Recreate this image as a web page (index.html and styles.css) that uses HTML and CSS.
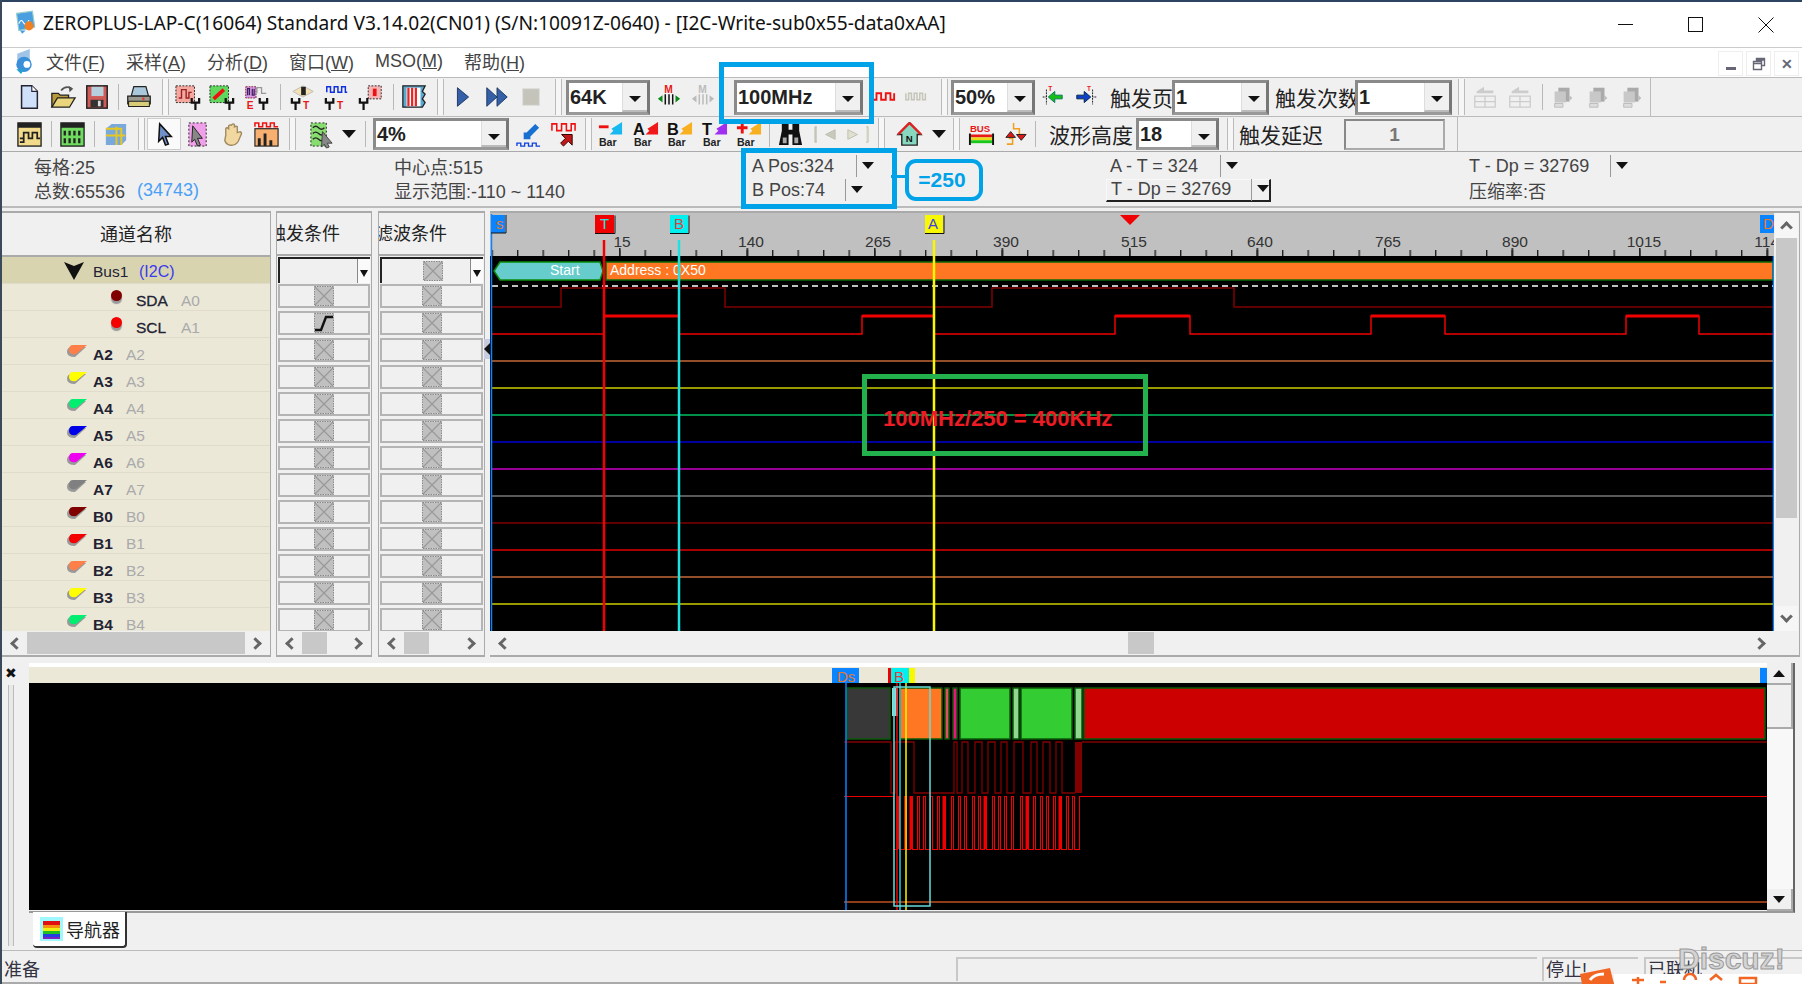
FILE: index.html
```html
<!DOCTYPE html>
<html lang="zh">
<head>
<meta charset="utf-8">
<title>ZEROPLUS-LAP-C</title>
<link rel="stylesheet" href="styles.css">
</head>
<body>
<svg class="defs" width="0" height="0">
  <symbol id="plug" viewBox="0 0 12 14"><path d="M2 1v5h8V1M6 6v8" fill="none" stroke="#111" stroke-width="2.4"/></symbol>
  <symbol id="flag" viewBox="0 0 20 14"><path d="M5 3H19L8 13Q0 13 0 8Q0 3 5 3Z" fill="#999"/><path d="M6 1H20L9 10Q2 11 2 6Q2 1 6 1Z" fill="currentColor"/></symbol>
  <symbol id="xbox" viewBox="0 0 20 20"><rect x=".5" y=".5" width="19" height="19" fill="#c0c0c0" stroke="#888" stroke-dasharray="1.5 1"/><path d="M1 1L19 19M19 1L1 19" stroke="#999" stroke-width="1.2"/></symbol>
  <symbol id="grayic" viewBox="0 0 28 28"><path d="M9 4h12v15H9z" fill="#aaa"/><path d="M5 8h12v12H5z" fill="#c8c8c8"/><path d="M5 21h9v4H5z" fill="#ddd" stroke="#bbb"/><path d="M21 12l3 3-3 3z" fill="#bbb"/></symbol>
  <symbol id="grayup" viewBox="0 0 28 28"><path d="M5 8l8-5v4h10v3H5z" fill="#ccc"/><path d="M3 13h22v12H3zM14 13v12M3 19h22" fill="none" stroke="#ccc" stroke-width="1.4"/></symbol>
</svg>

<div class="window">
  <header class="titlebar">
    <svg class="appicon" viewBox="0 0 20 22"><path d="M3 3l14-2 2 14-14 3z" fill="#4a9fe0" stroke="#9cc"/><path d="M5 12q2-5 4-1t5-2" fill="none" stroke="#fff"/><circle cx="14" cy="14" r="4" fill="#f08020"/><path d="M6 18l2 3 3-3z" fill="#4a9fe0"/></svg>
    <span class="title">ZEROPLUS-LAP-C(16064) Standard V3.14.02(CN01) (S/N:10091Z-0640) - [I2C-Write-sub0x55-data0xAA]</span>
    <div class="winbtns">
      <span class="wmin"></span>
      <span class="wmax"></span>
      <svg class="wclose" viewBox="0 0 16 16"><path d="M.5.5l15 15M15.5.5l-15 15" stroke="#111" fill="none"/></svg>
    </div>
  </header>

  <nav class="menubar">
    <svg class="menuicon" viewBox="0 0 24 28"><path d="M5 6l13-5v14L5 20z" fill="#9fc4e8"/><circle cx="12" cy="17" r="8" fill="#3a8fd8"/><circle cx="15" cy="17" r="3.5" fill="#fff"/><path d="M4 22l5 5 3-5z" fill="#22a0d0"/></svg>
    <span class="mi">文件(<u>F</u>)</span>
    <span class="mi">采样(<u>A</u>)</span>
    <span class="mi">分析(<u>D</u>)</span>
    <span class="mi">窗口(<u>W</u>)</span>
    <span class="mi">MSO(<u>M</u>)</span>
    <span class="mi">帮助(<u>H</u>)</span>
    <div class="mdibtns">
      <span class="mdi"><i class="mdimin"></i></span>
      <span class="mdi"><svg viewBox="0 0 14 14" width="14" height="14"><path d="M4.5 4V1.5h8v7H10M1.5 4.5h8v8h-8zM1.5 6.5h8M4.5 3h8" fill="none" stroke="#667" stroke-width="1.4"/></svg></span>
      <span class="mdi mdix">✕</span>
    </div>
  </nav>

  <div class="toolbar t1">
    <div class="tb first"><svg viewBox="0 0 28 28"><path d="M6 2h11l6 6v18H6z" fill="#cfe0fb" stroke="#223" stroke-width="1.6"/><path d="M17 2v6h6" fill="#fff" stroke="#223" stroke-width="1.2"/></svg></div>
    <div class="tb"><svg viewBox="0 0 28 28"><path d="M2 25V10h7l2 2h9v3" fill="#b99a3a" stroke="#222" stroke-width="1.4"/><path d="M8 15h19l-6 10H2z" fill="#e9d67c" stroke="#222" stroke-width="1.4"/><path d="M12 7q5-6 11-2" fill="none" stroke="#555" stroke-width="2"/><path d="M20 2l5 3-4 4z" fill="#555"/></svg></div>
    <div class="tb"><svg viewBox="0 0 28 28"><rect x="3" y="2" width="22" height="24" fill="#d05a55" stroke="#222" stroke-width="1.6"/><rect x="8" y="3" width="13" height="10" fill="#b5d0dc"/><rect x="7" y="17" width="14" height="8" fill="#333"/><rect x="15" y="18" width="3" height="6" fill="#ddd"/></svg></div>
    <i class="sep s8"></i>
    <div class="tb"><svg viewBox="0 0 30 28"><path d="M9 2h14l3 11H6z" fill="#a9c8dc" stroke="#222" stroke-width="1.4"/><path d="M2 13h26v9H2z" fill="#9a9a90" stroke="#222" stroke-width="1.4"/><path d="M3 19h24v6H3z" fill="#d8cc78" stroke="#222" stroke-width="1.2"/><circle cx="20" cy="16" r="1.5" fill="#e33"/></svg></div>
    <i class="grip g15"></i>
    <div class="tb"><svg viewBox="0 0 28 28"><rect x="1" y="2" width="20" height="18" fill="#f4a8a0" stroke="#222" stroke-dasharray="2 1.5"/><path d="M4 15h3V6h5v9h3V9h3" fill="none" stroke="#922" stroke-width="1.5"/><use href="#plug" x="16" y="14" width="12" height="14"/></svg></div>
    <div class="tb"><svg viewBox="0 0 28 28"><rect x="1" y="2" width="20" height="18" fill="#60d860" stroke="#222" stroke-dasharray="2 1.5"/><path d="M5 16L16 6" stroke="#e11" stroke-width="4"/><use href="#plug" x="16" y="14" width="12" height="14"/></svg></div>
    <div class="tb"><svg viewBox="0 0 28 28"><path d="M3 3h11v12H3z" fill="#d9a0e8" stroke="#713" stroke-dasharray="2 1"/><path d="M5 12V5h2v7M10 5v7h2V5" fill="none" stroke="#402060" stroke-width="1.4"/><path d="M15 10V4h5v6h5" fill="none" stroke="#999" stroke-width="1.4"/><text class="ict red" x="4" y="27">E</text><use href="#plug" x="16" y="14" width="12" height="14"/></svg></div>
    <i class="sep s13"></i>
    <div class="tb"><svg viewBox="0 0 28 28"><path d="M3 8L14 2l11 6-11 6z" fill="#f4e0b0" stroke="#bbb"/><rect x="12" y="3" width="5" height="9" fill="#222"/><use href="#plug" x="0" y="14" width="12" height="14"/><text class="ict red" x="14" y="27">T</text></svg></div>
    <div class="tb"><svg viewBox="0 0 28 28"><path d="M3 9V3h4v6h4V3h4v6h4V3h4v6h2" fill="none" stroke="#1030e0" stroke-width="1.6"/><use href="#plug" x="0" y="14" width="12" height="14"/><text class="ict red" x="14" y="27">T</text></svg></div>
    <div class="tb"><svg viewBox="0 0 28 28"><rect x="11" y="2" width="14" height="14" fill="#f6b4b4" stroke="#222" stroke-dasharray="2 1.5"/><rect x="16" y="5" width="4" height="8" fill="#e11"/><use href="#plug" x="0" y="14" width="12" height="14"/></svg></div>
    <i class="sep s9"></i>
    <div class="tb"><svg viewBox="0 0 28 28"><path d="M2 2h24l-3 6 3 3-3 5 3 4-3 5H2z" fill="#58a8d0" stroke="#222" stroke-width="1.4"/><path d="M6 4h15v20H6z" fill="#fff"/><path d="M8 4v20M12 4v20M16 4v20" stroke="#e22" stroke-width="2.4"/></svg></div>
    <i class="grip g15"></i>
    <div class="tb"><svg viewBox="0 0 28 28"><path d="M8 4l12 10L8 24z" fill="#3560a8" stroke="#1c3560"/></svg></div>
    <div class="tb"><svg viewBox="0 0 28 28"><path d="M3 4l11 10L3 24zM14 4l11 10-11 10z" fill="#3560a8" stroke="#1c3560"/></svg></div>
    <div class="tb"><svg viewBox="0 0 28 28"><rect x="5" y="5" width="18" height="18" fill="#c4c4ba" stroke="#ddd"/></svg></div>
    <i class="grip g18"></i>
    <div class="combo w84"><span>64K</span><b class="dd"></b></div>
    <div class="tb ml2"><svg viewBox="0 0 28 28"><text class="ict red" x="9" y="10">M</text><path d="M2 16l5-4v8zM26 16l-5-4v8z" fill="#0a8a1a"/><path d="M10 11v11M14 11v11M18 11v11" stroke="#111" stroke-width="1.6"/></svg></div>
    <div class="tb"><svg viewBox="0 0 28 28"><text class="ict gray" x="9" y="10">M</text><path d="M2 16l5-4v8zM26 16l-5-4v8z" fill="#bbb"/><path d="M10 11v11M14 11v11M18 11v11" stroke="#bbb" stroke-width="1.6"/></svg></div>
    <div class="combo w129 ml14"><span>100MHz</span><b class="dd"></b></div>
    <div class="tb ml3"><svg viewBox="0 0 28 28"><path d="M2 10v7h5v-7h5v7h5v-7h5v7h4v-7" fill="none" stroke="#e11" stroke-width="2"/></svg></div>
    <div class="tb"><svg viewBox="0 0 28 28"><path d="M2 10v7h3v-7h3v7h3v-7h3v7h3v-7h3v7h3v-7" fill="none" stroke="#c4c4b8" stroke-width="1.6"/></svg></div>
    <i class="grip g17"></i>
    <div class="combo w84"><span>50%</span><b class="dd"></b></div>
    <div class="tb"><svg viewBox="0 0 28 28"><path d="M8 6v16M4 14h4" stroke="#111" stroke-dasharray="2 1"/><text class="ict red sm" x="10" y="8">T</text><path d="M10 14l7-6v4h8v4h-8v4z" fill="#14c014" stroke="#075"/></svg></div>
    <div class="tb ml1"><svg viewBox="0 0 28 28"><path d="M20 6v16M24 14h-4" stroke="#111" stroke-dasharray="2 1"/><text class="ict red sm" x="14" y="8">T</text><path d="M18 14l-7-6v4H3v4h8v4z" fill="#1040c8" stroke="#024"/></svg></div>
    <label class="lbl w62">触发页</label>
    <div class="combo w97"><span>1</span><b class="dd"></b></div>
    <label class="lbl w80">触发次数</label>
    <div class="combo w97"><span>1</span><b class="dd"></b></div>
    <i class="grip g16"></i>
    <div class="tb"><svg viewBox="0 0 28 28"><use href="#grayup"/></svg></div>
    <div class="tb ml1"><svg viewBox="0 0 28 28"><use href="#grayup"/></svg></div>
    <i class="sep s9"></i>
    <div class="tb"><svg viewBox="0 0 28 28"><use href="#grayic"/></svg></div>
    <div class="tb ml1"><svg viewBox="0 0 28 28"><use href="#grayic"/></svg></div>
    <div class="tb"><svg viewBox="0 0 28 28"><use href="#grayic"/></svg></div>
    <i class="tend"></i>
  </div>

  <div class="toolbar t2">
    <div class="tb first"><svg viewBox="0 0 28 28"><rect x="2" y="2" width="24" height="24" fill="#f2dc8c" stroke="#222" stroke-width="1.4"/><rect x="2" y="2" width="24" height="5" fill="#222"/><path d="M4 18h4v-6h5v6h4v-6h5v6h3M4 22h4v-4" fill="none" stroke="#222" stroke-width="1.8"/></svg></div>
    <i class="sep s9"></i>
    <div class="tb"><svg viewBox="0 0 28 28"><rect x="2" y="2" width="24" height="24" fill="#6fdc60" stroke="#222" stroke-width="1.4"/><rect x="2" y="2" width="24" height="5" fill="#222"/><path d="M6 10v5M11 10v5M16 10v5M21 10v5M6 18v5M11 18v5M16 18v5M21 18v5" stroke="#222" stroke-width="2.4"/></svg></div>
    <i class="sep s9"></i>
    <div class="tb"><svg viewBox="0 0 28 28"><path d="M4 8l6-5h15v17l-5 5H4z" fill="#78a8dc"/><path d="M4 15h20M15 6v19M4 8h16v17" fill="none" stroke="#e8c820" stroke-width="2"/></svg></div>
    <i class="grip g15"></i>
    <div class="tb pressed"><svg viewBox="0 0 28 28"><path d="M9 3l12 13h-6l3 8-3 1-3-8-4 4z" fill="#7090c8" stroke="#111" stroke-width="1.6"/></svg></div>
    <div class="tb"><svg viewBox="0 0 28 28"><rect x="4" y="2" width="18" height="24" fill="#f0a0e8" stroke="#222" stroke-dasharray="2 2"/><path d="M8 5l10 13h-5l3 7-3 1-3-7-3 3z" fill="#888" stroke="#222"/></svg></div>
    <div class="tb"><svg viewBox="0 0 28 28"><path d="M7 15V8q1-2 3 0V5q2-2 3 0V4q2-2 3 0v2q2-1 3 0v6l3-1q2 1 1 3l-3 7q-3 5-9 4-4-1-5-5z" fill="#f0d8a0" stroke="#a08860" stroke-width="1.4"/></svg></div>
    <div class="tb"><svg viewBox="0 0 28 28"><path d="M2 6V2h4v4h4V2h4v4h4V2h4v4h4" fill="none" stroke="#e11" stroke-width="1.6"/><rect x="2" y="8" width="24" height="18" fill="#f8b070" stroke="#222" stroke-width="1.2"/><path d="M5 26v-8h3v8zM11 26V13h3v13zM17 26v-6h3v6z" fill="#222"/></svg></div>
    <i class="grip g15 nudge"></i>
    <div class="tb nar"><svg viewBox="0 0 28 28"><rect x="3" y="2" width="16" height="24" fill="#88dd70" stroke="#222" stroke-dasharray="2 2"/><path d="M5 7q3-3 6 0t6 0M5 13q3-3 6 0t6 0M5 19q3-3 6 0t6 0" fill="none" stroke="#222" stroke-width="1.4"/><path d="M15 11l10 12h-5l2 4-3 1-2-4-3 3z" fill="#888" stroke="#444"/></svg></div>
    <b class="tri"></b>
    <i class="sep s17"></i>
    <div class="combo w136"><span>4%</span><b class="dd"></b></div>
    <div class="tb ml2"><svg viewBox="0 0 28 28"><path d="M21 3l-9 9h-3v7h7v-3l9-9z" fill="#1870d0"/><path d="M2 26v-3h4v3h4v-3h4v3h4v-3h4v3h4" fill="none" stroke="#1040e0" stroke-width="1.4"/></svg></div>
    <div class="tb ml1"><svg viewBox="0 0 28 28"><path d="M2 10V3h5v7h5V3h5v7h5V3h4v7" fill="none" stroke="#e11" stroke-width="1.6"/><path d="M12 14h11v11l-4-4-5 5-3-3 5-5z" fill="#c01818" stroke="#300"/></svg></div>
    <i class="grip g13"></i>
    <div class="tb"><svg viewBox="0 0 28 28"><path d="M2 6h10" stroke="#e11" stroke-width="3"/><path d="M26 1v13H13l4-4-2-2 5-3z" fill="#18b8f0"/><text class="bar" x="2" y="26">Bar</text></svg></div>
    <div class="tb ml1"><svg viewBox="0 0 28 28"><text class="ltr" x="1" y="15">A</text><path d="M27 1v13H14l4-4-2-2 5-3z" fill="#f01818"/><text class="bar" x="2" y="26">Bar</text></svg></div>
    <div class="tb"><svg viewBox="0 0 28 28"><text class="ltr" x="1" y="15">B</text><path d="M27 1v13H14l4-4-2-2 5-3z" fill="#f8b020"/><text class="bar" x="2" y="26">Bar</text></svg></div>
    <div class="tb ml1"><svg viewBox="0 0 28 28"><text class="ltr" x="1" y="15">T</text><path d="M27 1v13H14l4-4-2-2 5-3z" fill="#a030f0"/><text class="bar" x="2" y="26">Bar</text></svg></div>
    <div class="tb"><svg viewBox="0 0 28 28"><path d="M2 7h11M7.5 2v11" stroke="#e11" stroke-width="3"/><path d="M27 1v13H14l4-4-2-2 5-3z" fill="#f8b020"/><text class="bar" x="2" y="26">Bar</text></svg></div>
    <i class="sep s8"></i>
    <div class="tb"><svg viewBox="0 0 28 28"><path d="M5 3h7v6h4V3h7v7l3 15H16V14h-4v11H2L5 10z" fill="#111"/><path d="M6 17h4v6H6zM18 17h4v6h-4z" fill="#aaa"/></svg></div>
    <div class="tb ml1"><svg viewBox="0 0 28 28"><path d="M5 6h-2v16h2M24 9l-10 5 10 5z" fill="#c8c8bc" stroke="#c0c0b0"/></svg></div>
    <div class="tb nar2"><svg viewBox="0 0 28 28"><path d="M23 6h2v16h-2M4 9l10 5-10 5z" fill="#e0e0d0" stroke="#c0c0b0"/></svg></div>
    <i class="grip g15"></i>
    <div class="tb nudge2"><svg viewBox="0 0 28 28"><path d="M14 2L2 14h4v11h16V14h4z" fill="#88d8c0" stroke="#222" stroke-width="1.4"/><path d="M14 2L2 14M14 2l12 12" stroke="#e02020" stroke-width="2.4"/><text class="ltr tiny" x="10" y="22">N</text></svg></div>
    <b class="tri tri2"></b>
    <i class="grip g18"></i>
    <div class="tb"><svg viewBox="0 0 28 28"><text class="ltr red tiny" x="2" y="11">BUS</text><rect x="3" y="14" width="22" height="3" fill="#e81818"/><rect x="3" y="17" width="22" height="3" fill="#e8d818"/><rect x="3" y="20" width="22" height="3" fill="#18c818"/><path d="M2 13v12M26 13v12" stroke="#111" stroke-width="2"/></svg></div>
    <div class="tb"><svg viewBox="0 0 28 28"><path d="M12 2v6h6v6h6M5 24h6v-6h-4" fill="none" stroke="#f0a020" stroke-width="1.6"/><path d="M9 11l5 6H4zM20 20l-5-6h10z" fill="#e01818" stroke="#222"/></svg></div>
    <i class="sep s17 left"></i>
    <label class="lbl w88">波形高度</label>
    <div class="combo w83"><span>18</span><b class="dd"></b></div>
    <i class="grip g20"></i>
    <label class="lbl w88">触发延迟</label>
    <div class="delay">1</div>
    <i class="tend t2end"></i>
  </div>

  <section class="info">
    <div class="ci"><span>每格:25</span></div>
    <div class="ci"><span>中心点:515</span></div>
    <div class="ci cw1"><span>A Pos:324</span><i class="isep"></i><b class="iarrow"></b></div>
    <div class="ci cw2"><span>A - T = 324</span><i class="isep"></i><b class="iarrow"></b></div>
    <div class="ci cw3"><span>T - Dp = 32769</span><i class="isep"></i><b class="iarrow"></b></div>
    <div class="ci"><span>总数:65536</span><span class="blue">(34743)</span></div>
    <div class="ci"><span>显示范围:-110 ~ 1140</span></div>
    <div class="ci cw4"><span>B Pos:74</span><i class="isep"></i><b class="iarrow"></b></div>
    <div class="ci"><div class="ibox"><span>T - Dp = 32769</span><i class="isep"></i><b class="iarrow"></b></div></div>
    <div class="ci"><span>压缩率:否</span></div>
  </section>

  <main class="panels">
    <section class="panel pname">
      <div class="phead hn">通道名称</div>
      <div class="pbody">
        <div class="row bus"><svg class="bustri" viewBox="0 0 20 18"><path d="M0 0l10 4 10-4-10 18z" fill="#111"/></svg><span class="nm">Bus1</span><span class="i2c">(I2C)</span></div>
        <div class="row sub"><i class="dot dk"></i><span class="nm sn">SDA</span><span class="al">A0</span></div>
        <div class="row sub"><i class="dot rd"></i><span class="nm sn">SCL</span><span class="al">A1</span></div>
        <div class="row"><svg class="flag c-or"><use href="#flag"/></svg><span class="nm">A2</span><span class="al">A2</span></div>
        <div class="row"><svg class="flag c-ye"><use href="#flag"/></svg><span class="nm">A3</span><span class="al">A3</span></div>
        <div class="row"><svg class="flag c-gr"><use href="#flag"/></svg><span class="nm">A4</span><span class="al">A4</span></div>
        <div class="row"><svg class="flag c-bl"><use href="#flag"/></svg><span class="nm">A5</span><span class="al">A5</span></div>
        <div class="row"><svg class="flag c-mg"><use href="#flag"/></svg><span class="nm">A6</span><span class="al">A6</span></div>
        <div class="row"><svg class="flag c-gy"><use href="#flag"/></svg><span class="nm">A7</span><span class="al">A7</span></div>
        <div class="row"><svg class="flag c-dk"><use href="#flag"/></svg><span class="nm">B0</span><span class="al">B0</span></div>
        <div class="row"><svg class="flag c-rd"><use href="#flag"/></svg><span class="nm">B1</span><span class="al">B1</span></div>
        <div class="row"><svg class="flag c-or"><use href="#flag"/></svg><span class="nm">B2</span><span class="al">B2</span></div>
        <div class="row"><svg class="flag c-ye"><use href="#flag"/></svg><span class="nm">B3</span><span class="al">B3</span></div>
        <div class="row"><svg class="flag c-gr"><use href="#flag"/></svg><span class="nm">B4</span><span class="al">B4</span></div>
      </div>
      <div class="hs"><b class="sbtn"><i class="chev l"></i></b><i class="thumb grow"></i><b class="sbtn"><i class="chev r"></i></b></div>
    </section>

    <section class="panel ptrig">
      <div class="phead clipl c1"><span>触发条件</span></div>
      <div class="pbody cells">
        <div class="buscell"><b class="bdd"></b></div>
        <div class="cell"><svg class="xi"><use href="#xbox"/></svg></div>
        <div class="cell"><svg class="xi" viewBox="0 0 20 20"><rect x=".5" y=".5" width="19" height="19" fill="#c0c0c0" stroke="#888" stroke-dasharray="1.5 1"/><path d="M1 17h6L12 4h7" fill="none" stroke="#111" stroke-width="2.4"/></svg></div>
        <div class="cell"><svg class="xi"><use href="#xbox"/></svg></div>
        <div class="cell"><svg class="xi"><use href="#xbox"/></svg></div>
        <div class="cell"><svg class="xi"><use href="#xbox"/></svg></div>
        <div class="cell"><svg class="xi"><use href="#xbox"/></svg></div>
        <div class="cell"><svg class="xi"><use href="#xbox"/></svg></div>
        <div class="cell"><svg class="xi"><use href="#xbox"/></svg></div>
        <div class="cell"><svg class="xi"><use href="#xbox"/></svg></div>
        <div class="cell"><svg class="xi"><use href="#xbox"/></svg></div>
        <div class="cell"><svg class="xi"><use href="#xbox"/></svg></div>
        <div class="cell"><svg class="xi"><use href="#xbox"/></svg></div>
        <div class="cell"><svg class="xi"><use href="#xbox"/></svg></div>
      </div>
      <div class="hs"><b class="sbtn"><i class="chev l"></i></b><i class="thumb w25"></i><i class="grow"></i><b class="sbtn"><i class="chev r"></i></b></div>
    </section>

    <section class="panel pfilt">
      <div class="phead clipl c2"><span>滤波条件</span></div>
      <div class="pbody cells">
        <div class="buscell"><svg class="xi"><use href="#xbox"/></svg><b class="bdd"></b></div>
        <div class="cell"><svg class="xi"><use href="#xbox"/></svg></div>
        <div class="cell"><svg class="xi"><use href="#xbox"/></svg></div>
        <div class="cell"><svg class="xi"><use href="#xbox"/></svg></div>
        <div class="cell"><svg class="xi"><use href="#xbox"/></svg></div>
        <div class="cell"><svg class="xi"><use href="#xbox"/></svg></div>
        <div class="cell"><svg class="xi"><use href="#xbox"/></svg></div>
        <div class="cell"><svg class="xi"><use href="#xbox"/></svg></div>
        <div class="cell"><svg class="xi"><use href="#xbox"/></svg></div>
        <div class="cell"><svg class="xi"><use href="#xbox"/></svg></div>
        <div class="cell"><svg class="xi"><use href="#xbox"/></svg></div>
        <div class="cell"><svg class="xi"><use href="#xbox"/></svg></div>
        <div class="cell"><svg class="xi"><use href="#xbox"/></svg></div>
        <div class="cell"><svg class="xi"><use href="#xbox"/></svg></div>
      </div>
      <div class="hs"><b class="sbtn"><i class="chev l"></i></b><i class="thumb w25"></i><i class="grow"></i><b class="sbtn"><i class="chev r"></i></b></div>
      <b class="collapse"></b>
    </section>

    <section class="panel pmain">
      <div class="mainrow">
        <svg class="wave" viewBox="490 213 1284 418" width="1284" height="418">
          <defs>
            <pattern id="mint" patternUnits="userSpaceOnUse" x="491.5" y="213" width="25.5" height="43"><rect x="0" y="37" width="1.4" height="6" fill="#222"/></pattern>
            <pattern id="majt" patternUnits="userSpaceOnUse" x="491.5" y="213" width="127.5" height="43"><rect x="0" y="35" width="1.6" height="8" fill="#222"/></pattern>
          </defs>
          <rect x="490" y="213" width="1284" height="43" fill="#c0c0c0"/>
          <rect x="490" y="213" width="1284" height="43" fill="url(#mint)"/>
          <rect x="619" y="213" width="1155" height="43" fill="url(#majt)"/>
          <g class="rl">
            <text x="622" y="247">15</text><text x="751" y="247">140</text><text x="878" y="247">265</text><text x="1006" y="247">390</text><text x="1134" y="247">515</text><text x="1260" y="247">640</text><text x="1388" y="247">765</text><text x="1515" y="247">890</text><text x="1644" y="247">1015</text><text x="1771" y="247">1140</text>
          </g>
          <rect x="490" y="256" width="1284" height="375" fill="#000"/>

          <rect x="606" y="262" width="1167" height="18" fill="#ff7722" stroke="#0a6a0a" stroke-width="1.5"/>
          <path d="M500 262H600L603 271L600 280H500L494 271Z" fill="#66cccc" stroke="#0a8a0a" stroke-width="1.5"/>
          <text class="bt" x="550" y="275">Start</text>
          <text class="bt" x="610" y="275">Address : 0X50</text>

          <path d="M492 286H1773" stroke="#fff" stroke-width="1.5" stroke-dasharray="6 4"/>
          <path d="M492 307H561V288H725V307H992V288H1234V307H1773" fill="none" stroke="#800000" stroke-width="1.5"/>
          <path d="M492 334H604V316H679V334H862V316H934V334H1115V316H1190V334H1371V316H1445V334H1626V316H1699V334H1773" fill="none" stroke="#f00000" stroke-width="1.5"/>
          <path d="M604 316H679M862 316H934M1115 316H1190M1371 316H1445M1626 316H1699" stroke="#f00000" stroke-width="3"/>
          <g class="ch">
            <path d="M492 361H1773" stroke="#c46a38"/>
            <path d="M492 388H1773" stroke="#cccc00"/>
            <path d="M492 415H1773" stroke="#00c060"/>
            <path d="M492 442H1773" stroke="#0000d8"/>
            <path d="M492 469H1773" stroke="#c800c8"/>
            <path d="M492 496H1773" stroke="#777"/>
            <path d="M492 523H1773" stroke="#800000"/>
            <path d="M492 550H1773" stroke="#e00000"/>
            <path d="M492 577H1773" stroke="#c46a38"/>
            <path d="M492 604H1773" stroke="#cccc00"/>
          </g>

          <path d="M491.5 214V631M1773.5 256V631" stroke="#0a84ff" stroke-width="1.5"/>
          <path d="M604 240V631" stroke="#f00000" stroke-width="2.5"/>
          <path d="M679 240V631" stroke="#20e0e0" stroke-width="2.5"/>
          <path d="M934 240V631" stroke="#f8f800" stroke-width="2.5"/>

          <rect x="491" y="215" width="14" height="18" fill="#0a84ff"/><path d="M491 233h15v-18" fill="none" stroke="#111"/>
          <text class="mk or" x="496" y="229">s</text>
          <rect x="595" y="215" width="19" height="18" fill="#f00000"/><path d="M595 233.5h20v-18" fill="none" stroke="#111"/>
          <text class="mk cy" x="600" y="229">T</text>
          <rect x="670" y="215" width="18" height="18" fill="#00f0f0"/><path d="M670 233.5h19v-18" fill="none" stroke="#111"/>
          <text class="mk rd" x="674" y="229">B</text>
          <rect x="925" y="215" width="18" height="18" fill="#f8f800"/><path d="M925 233.5h19v-18" fill="none" stroke="#111"/>
          <text class="mk bl" x="928" y="229">A</text>
          <rect x="1760" y="215" width="14" height="18" fill="#0a84ff"/>
          <text class="mk or" x="1763" y="229">D</text>
          <path d="M1120 215h20l-10 10z" fill="#f00000"/>
        </svg>
        <aside class="vs">
          <b class="vbtn"><i class="chev u"></i></b>
          <i class="vthumb"></i>
          <i class="grow"></i>
          <b class="vbtn"><i class="chev d"></i></b>
        </aside>
      </div>
      <div class="hs"><b class="sbtn"><i class="chev l"></i></b><i class="sp613"></i><i class="thumb w26"></i><i class="grow"></i><b class="sbtn mr"><i class="chev r"></i></b></div>
      <div class="note"><span>100MHz/250 = 400KHz</span></div>
    </section>
  </main>

  <section class="nav">
    <div class="navside"><span class="navx">✖</span><i class="navgrip"></i></div>
    <div class="navmain">
      <div class="navbox">
        <svg class="over" viewBox="29 663 1738 247" width="1738" height="247">
          <rect x="29" y="663" width="1738" height="4" fill="#fff"/>
          <rect x="29" y="667" width="1738" height="16" fill="#ebe8d8"/>
          <rect x="29" y="683" width="1738" height="227" fill="#000"/>
          <rect x="832" y="668" width="27" height="15" fill="#0a84ff"/>
          <text class="nk or" x="837" y="682">Ds</text>
          <rect x="888" y="668" width="3" height="15" fill="#f00000"/>
          <rect x="891" y="668" width="18" height="15" fill="#00f0f0"/>
          <text class="nk rd" x="894" y="682">B</text>
          <rect x="909" y="668" width="6" height="15" fill="#f8f800"/>
          <rect x="1760" y="668" width="7" height="15" fill="#0a84ff"/>

          <g class="bars">
            <rect x="847" y="688" width="43" height="51" fill="#383838"/>
            <rect x="900" y="688" width="42" height="51" fill="#ff7722"/>
            <rect x="945" y="688" width="4" height="51" fill="#e05060"/>
            <rect x="953" y="688" width="4" height="51" fill="#f01080"/>
            <rect x="960" y="688" width="50" height="51" fill="#33cc33"/>
            <rect x="1013" y="688" width="6" height="51" fill="#90d890"/>
            <rect x="1021" y="688" width="51" height="51" fill="#33cc33"/>
            <rect x="1075" y="688" width="7" height="51" fill="#90d890"/>
            <rect x="1084" y="688" width="681" height="51" fill="#cc0000"/>
          </g>
          <rect x="892" y="688" width="6" height="28" fill="#88dddd"/>

          <path d="M844 742H891V793H895V742H914V793H954V742H957V793H962V742H968V793H975V742H982V793H988V742H995V793H1001V742H1007V793H1014V742H1023V793H1031V742H1037V793H1043V742H1050V793H1056V742H1062V793H1075M1082 742H1767" fill="none" stroke="#800000" stroke-width="1.3"/>
          <rect x="1075" y="742" width="7" height="51" fill="#800000"/>
          <path class="crisp" d="M844 796H893V849H897V796H899V849H904V796H906V849H910V796H912V849H917V796H919V849H923V796H925V849H930V796H932V849H937V796H939V849H943V796H945V849H951V796H953V849H958V796H960V849H964V796H966V849H972V796H974V849H978V796H980V849H984V796H986V849H992V796H994V849H998V796H1000V849H1004V796H1006V849H1011V796H1013V849H1020V796H1022V849H1026V796H1028V849H1033V796H1035V849H1040V796H1042V849H1046V796H1048V849H1053V796H1055V849H1059V796H1061V849H1066V796H1068V849H1072V796H1074V849H1079V796H1767" fill="none" stroke="#f00000" stroke-width="1"/>
          <path d="M898 796V849M911 796V849M944 796V849M985 796V849M1027 796V849M1060 796V849" stroke="#f00000" stroke-width="3"/>
          <path d="M844 902H1767" stroke="#c05020" stroke-width="1.5"/>
          <path d="M846 683V910" stroke="#0a84ff" stroke-width="1.5"/>
          <path d="M897 683V910" stroke="#f00000" stroke-width="1.5"/>
          <path d="M900 683V910" stroke="#20d0d8" stroke-width="1.5"/>
          <path d="M906 683V910" stroke="#f8f800" stroke-width="1.5"/>
          <rect x="894" y="687" width="36" height="219" fill="none" stroke="#66dddd" stroke-width="1.5"/>
        </svg>
        <aside class="nvs">
          <b class="nbtn"><i class="tr up"></i></b>
          <i class="nthumb"></i>
          <i class="grow dither"></i>
          <b class="nbtn"><i class="tr dn"></i></b>
        </aside>
      </div>
      <div class="tabs">
        <div class="tab"><svg viewBox="0 0 23 24" class="rainbow"><rect width="23" height="24" fill="#a0f8ff"/><rect x="3" y="4" width="17" height="4" fill="#e01010"/><rect x="3" y="8" width="17" height="3" fill="#f89010"/><rect x="3" y="11" width="17" height="3" fill="#f0f010"/><rect x="3" y="14" width="17" height="3" fill="#20c020"/><rect x="3" y="17" width="17" height="3" fill="#2040e0"/><rect x="3" y="20" width="17" height="2" fill="#8020c0"/></svg><span>导航器</span></div>
      </div>
    </div>
  </section>

  <footer class="status">
    <span class="st0">准备</span>
    <span class="stb b1"></span>
    <span class="stb b2">停止!</span>
    <span class="stb b3">已联机</span>
  </footer>

  <div class="hl hl1"></div>
  <div class="hl hl2"></div>
  <div class="hl hl3"></div>
  <div class="hl eq">=250</div>
  <div class="wm">Discuz!</div>
  <svg class="wmlogo" viewBox="0 0 222 16" width="222" height="16"><path d="M0 6L30 0l4 16H2z" fill="#f26522"/><path d="M10 12q4-6 14-6" fill="none" stroke="#fff" stroke-width="3"/><rect x="34" y="6" width="188" height="10" fill="#fff"/><path d="M52 12h12M58 9v7M80 14h6M104 12a6 6 0 0 1 12 0M130 12l6-5 6 5M160 10h16v6h-16z" fill="none" stroke="#f26522" stroke-width="2.5"/></svg>
</div>
</body>
</html>
```
FILE: styles.css
```css
* { box-sizing: border-box; }
html, body { margin: 0; padding: 0; }
body { width: 1802px; height: 984px; overflow: hidden; background: #f0f0f0; color: #333;
  font-family: "Liberation Sans", "Noto Sans CJK SC", sans-serif; }
i, b { display: block; font-style: normal; font-weight: normal; }
.defs { position: absolute; }
.window { position: relative; width: 1802px; height: 984px; display: flex; flex-direction: column; overflow: hidden; border-left: 2px solid #3a4a5a; }
.grow { flex: 1; }

/* title */
.titlebar { height: 48px; flex: none; background: #fff; border-top: 2px solid #2c4460; border-bottom: 1px solid #ccc; display: flex; align-items: center; padding: 0 0 4px 11px; }
.appicon { width: 23px; height: 25px; margin-right: 7px; flex: none; }
.title { font-family: "Noto Sans", "Noto Sans CJK SC", sans-serif; font-size: 19.15px; color: #111; white-space: nowrap; }
.winbtns { margin-left: auto; display: flex; align-items: center; padding: 4px 28px 0 0; }
.wmin { width: 15px; height: 1px; background: #111; margin-right: 55px; }
.wmax { width: 15px; height: 15px; border: 1px solid #111; margin-right: 55px; }
.wclose { width: 16px; height: 16px; }

/* menu */
.menubar { height: 29px; flex: none; background: #fff; display: flex; align-items: center; padding: 0 0 3px 10px; }
.menuicon { width: 24px; height: 27px; margin-right: 10px; flex: none; }
.mi { font-size: 18px; color: #444; margin-right: 21px; white-space: nowrap; }
.mdibtns { margin-left: auto; display: flex; gap: 3px; padding-right: 3px; align-self: flex-start; }
.mdi { width: 25px; height: 25px; margin-top: 3px; border: 1px solid #eee; display: flex; align-items: center; justify-content: center; color: #667; font-size: 14px; font-weight: bold; }
.mdimin { width: 10px; height: 3px; background: #667; margin-top: 9px; }

/* toolbars */
.toolbar { flex: none; display: flex; align-items: center; background: #f0f0f0; border-top: 1px solid #bbb; }
.t1 { height: 39px; padding-left: 10px; }
.t2 { height: 36px; padding-left: 10px; border-bottom: 1px solid #aaa; }
.tb { width: 34px; height: 34px; flex: none; display: flex; align-items: center; justify-content: center; }
.tb svg { width: 26px; height: 26px; overflow: visible; }
.t2 .tb svg { width: 27px; height: 27px; }
.pressed { background: #fafafa; border: 1px solid #ccc; height: 33px; }
.nar { width: 30px; }
.nar2 { width: 30px; }
.nudge { margin-right: 8px; }
.nudge2 { margin-left: 7px; width: 30px; }
.ml1 { margin-left: 1px; }
.ml2 { margin-left: 2px; }
.ml3 { margin-left: 3px; }
.ml14 { margin-left: 14px; }
.sep { flex: none; height: 26px; position: relative; }
.sep::after { content: ""; position: absolute; left: 50%; top: 0; width: 1px; height: 26px; background: #b8b8b8; }
.sep.left::after { left: 3px; }
.s8 { width: 8px; } .s9 { width: 9px; } .s13 { width: 13px; } .s17 { width: 17px; }
.grip { flex: none; align-self: stretch; position: relative; }
.grip::after { content: ""; position: absolute; left: 40%; top: 1px; bottom: 1px; width: 5px; border-left: 1px solid #bbb; border-right: 1px solid #bbb; background: #f6f6f6; }
.g13 { width: 13px; } .g15 { width: 15px; } .g16 { width: 16px; } .g17 { width: 17px; } .g18 { width: 18px; } .g20 { width: 20px; }
.tend { flex: none; align-self: stretch; width: 1px; background: #bbb; margin-left: 1px; }
.t2end { margin-left: 12px; }
.tri { width: 0; height: 0; border-left: 7px solid transparent; border-right: 7px solid transparent; border-top: 8px solid #111; margin-left: 6px; flex: none; }
.tri2 { margin-left: 8px; }
.lbl { flex: none; font-size: 21px; color: #222; white-space: nowrap; overflow: hidden; }
.w62 { width: 62px; margin-left: 6px; } .w80 { width: 80px; margin-left: 6px; } .w88 { width: 87px; }
.combo { flex: none; height: 35px; background: #fff; border: 3px solid #8a8a8a; border-right-color: #777; border-bottom-color: #999; display: flex; align-items: center; font-size: 20px; font-weight: bold; color: #222; padding-left: 1px; }
.combo span { flex: 1; }
.dd { width: 25px; align-self: stretch; background: #f0f0f0; border-left: 1px solid #ddd; border-bottom: 2px solid #bbb; position: relative; }
.dd::after { content: ""; position: absolute; left: 6px; top: 13px; border-left: 6px solid transparent; border-right: 6px solid transparent; border-top: 6px solid #111; }
.w84 { width: 84px; } .w129 { width: 129px; } .w97 { width: 97px; } .w136 { width: 136px; height: 32px; } .w83 { width: 83px; height: 32px; }
.delay { flex: none; width: 101px; height: 31px; margin-left: 18px; border: 2px solid #888; border-right-color: #aaa; border-bottom-color: #aaa; text-align: center; font-size: 19px; font-weight: bold; color: #777; line-height: 27px; }
.t2 .tb { height: 32px; }
.ict { font: bold 11px "Liberation Sans", sans-serif; }
.ict.sm { font-size: 7px; }
.red { fill: #e81818; }
.gray { fill: #bbb; }
.bar { font: bold 11px "Liberation Sans", sans-serif; fill: #222; }
.ltr { font: bold 17px "Liberation Sans", sans-serif; fill: #111; }
.ltr.tiny { font-size: 10px; }
.ltr.red { fill: #e81818; }

/* info */
.info { height: 56px; flex: none; display: grid; grid-template-columns: 360px 358px 358px 359px 1fr; grid-template-rows: 24px 24px; padding: 2px 0 0 32px; border-bottom: 2px solid #bbb; font-size: 18px; color: #444; }
.ci { display: flex; align-items: center; white-space: nowrap; }
.blue { color: #4aa0f8; margin-left: 12px; }
.cw1 span { width: 104px; } .cw4 span { width: 93px; }
.cw2 span { width: 110px; } .cw3 span { width: 141px; }
.isep { width: 1px; height: 22px; background: #999; margin-right: 4px; flex: none; }
.iarrow { width: 0; height: 0; border-left: 6px solid transparent; border-right: 6px solid transparent; border-top: 7px solid #111; margin-top: -2px; margin-left: 1px; }
.ibox { display: flex; align-items: center; width: 165px; height: 23px; margin-left: -4px; padding-left: 4px; border: 1px solid #f8f8f8; border-right: 2px solid #222; border-bottom: 2px solid #222; }
.ibox span { width: 141px; }

/* panels */
.panels { position: relative; flex: none; height: 450px; margin-top: 3px; display: flex; gap: 5px; padding-right: 2px; }
.panel { position: relative; display: flex; flex-direction: column; border: 1px solid #aaa; border-top-width: 2px; border-bottom-width: 2px; background: #f0f0f0; height: 446px; }
.pname { width: 269px; border-left: 0; }
.ptrig { width: 96px; }
.pfilt { width: 107px; margin-left: 1px; }
.pmain { width: 1310px; border-left: 0; border-right: 1px solid #aaa; }
.phead { height: 43px; flex: none; border-bottom: 2px solid #aaa; text-align: center; line-height: 43px; font-size: 18px; color: #222; white-space: nowrap; overflow: hidden; }
.phead.hn { height: 44px; line-height: 45px; }
.clipl { text-align: left; }
.clipl.c1 span { margin-left: -9px; }
.clipl.c2 span { margin-left: -4px; }
.pbody { flex: 1; overflow: hidden; min-height: 0; }
.row { height: 27px; display: flex; align-items: center; padding: 7px 0 0 65px; background: #ebe8d8; border-bottom: 1px solid #dfdccb; }
.bus { background: #d9d4b0; padding-top: 3px; }
.sub { padding-left: 109px; }
.nm { font-size: 15.5px; font-weight: bold; color: #223; width: 33px; flex: none; }
.sn { width: 45px; margin-left: 14px; font-weight: normal; -webkit-text-stroke: .3px #223; }
.al { font-size: 15.5px; color: #aaa; }
.i2c { color: #3a3aee; font-size: 16px; margin-left: 13px; }
.bus .nm { font-weight: normal; width: 33px; }
.bustri { width: 20px; height: 18px; margin: -2px 9px 0 -3px; flex: none; }
.flag { width: 20px; height: 14px; margin: -7px 6px 0 0; flex: none; }
.c-or { color: #ff7f48; } .c-ye { color: #ffff00; } .c-gr { color: #00ee70; } .c-bl { color: #0000e8; } .c-mg { color: #f000f0; } .c-gy { color: #808080; } .c-dk { color: #800000; } .c-rd { color: #f40000; }
.dot { width: 11px; height: 11px; border-radius: 50%; margin-top: -11px; box-shadow: 0 3px 1px #999; flex: none; }
.dk { background: #800000; }
i.rd { background: #f40000; }

.cells { padding: 0 1px; }
.buscell { position: relative; height: 26px; margin: 1px 0 1px; background: #f0f0f0; border-top: 2px solid #222; border-left: 2px solid #222; display: flex; align-items: center; justify-content: center; }
.bdd { position: absolute; right: 0; top: 0; bottom: 0; width: 13px; background: #fafafa; border-left: 1px solid #888; }
.bdd::after { content: ""; position: absolute; left: 2px; top: 11px; border-left: 4.5px solid transparent; border-right: 4.5px solid transparent; border-top: 7px solid #111; }
.cell { height: 24px; margin-bottom: 3px; background: #f0f0f0; border: 2px solid #b4b4b4; display: flex; align-items: center; justify-content: center; }
.xi { width: 20px; height: 20px; flex: none; }
.collapse { position: absolute; left: 105px; top: 126px; width: 6px; height: 20px; background: #c8cce0; z-index: 2; }
.collapse::after { content: ""; position: absolute; left: 0; top: 4px; border-top: 6px solid transparent; border-bottom: 6px solid transparent; border-right: 6px solid #111; }

.hs { height: 24px; flex: none; display: flex; align-items: center; background: #f0f0f0; }
.sbtn { width: 25px; height: 24px; flex: none; display: flex; align-items: center; justify-content: center; }
.mr { margin-right: 25px; }
.thumb { height: 22px; background: #c8c8c8; align-self: center; }
.thumb.grow { flex: 1; }
.w25 { width: 25px; flex: none; } .w26 { width: 26px; flex: none; }
.sp613 { width: 613px; flex: none; }
.chev { width: 9px; height: 9px; border: solid #666; border-width: 3px 0 0 3px; }
.chev.l { transform: rotate(-45deg); margin-left: 4px; }
.chev.r { transform: rotate(135deg); margin-right: 4px; }
.chev.u { transform: rotate(45deg); margin-top: 4px; }
.chev.d { transform: rotate(225deg); margin-bottom: 4px; }

.mainrow { display: flex; height: 418px; flex: none; }
.wave { display: block; flex: none; }
.vs { width: 23px; margin-left: 1px; display: flex; flex-direction: column; background: #f0f0f0; }
.vbtn { height: 25px; flex: none; display: flex; align-items: center; justify-content: center; background: #f6f6f6; }
.vthumb { height: 280px; flex: none; background: #c8c8c8; margin: 0 1px; }
.rl text { font: 15.5px "Liberation Sans", sans-serif; fill: #333; text-anchor: middle; }
.bt { font: 14px "Liberation Sans", sans-serif; fill: #fff; }
.ch path { stroke-width: 1.6; }
.bars rect { stroke: #0a5a0a; stroke-width: 1.5; }
.crisp { shape-rendering: crispEdges; }
.mk { font: 15px "Liberation Sans", sans-serif; }
.nk { font: 15px "Liberation Sans", sans-serif; }
.or { fill: #e87830; } .cy { fill: #30e0e0; } .bl { fill: #4040e0; }
text.rd { fill: #e04040; }
.note { position: absolute; left: 372px; top: 161px; width: 286px; height: 82px; border: 5px solid #22b14c; display: flex; align-items: center; padding-left: 16px; }
.note span { font-size: 22px; font-weight: bold; color: #ed1c24; white-space: nowrap; margin-top: 7px; }

/* navigator */
.nav { flex: none; height: 289px; display: flex; }
.navside { width: 27px; flex: none; position: relative; }
.navx { position: absolute; left: 3px; top: 4px; font-size: 14px; color: #111; line-height: 16px; }
.navgrip { position: absolute; left: 6px; top: 24px; bottom: 4px; width: 6px; border-left: 1px solid #bbb; border-right: 1px solid #bbb; background: #e8e8e8; }
.navmain { flex: 1; display: flex; flex-direction: column; }
.navbox { display: flex; height: 250px; flex: none; margin-top: 2px; width: 1766px; border-right: 2px solid #666; border-bottom: 2px solid #999; }
.over { display: block; flex: none; }
.nvs { width: 26px; flex: none; display: flex; flex-direction: column; background: #f4f4f4; }
.nbtn { height: 22px; flex: none; background: #f0f0f0; border-right: 2px solid #aaa; border-bottom: 2px solid #aaa; display: flex; align-items: center; justify-content: center; }
.nthumb { height: 44px; flex: none; background: #f0f0f0; border-right: 2px solid #aaa; border-bottom: 2px solid #aaa; }
.dither { background: #f8f8f8; }
.tr { width: 0; height: 0; border-left: 6px solid transparent; border-right: 6px solid transparent; }
.tr.up { border-bottom: 7px solid #111; }
.tr.dn { border-top: 7px solid #111; }
.tabs { flex: 1; }
.tab { width: 94px; height: 36px; margin-left: 4px; margin-top: -1px; background: #fff; border-right: 2px solid #333; border-bottom: 2px solid #333; border-radius: 0 0 4px 4px; display: flex; align-items: center; padding-left: 7px; font-size: 18px; color: #222; gap: 3px; white-space: nowrap; }
.rainbow { width: 23px; height: 24px; flex: none; }

/* status */
.status { flex: 1; display: flex; border-top: 1px solid #bbb; border-bottom: 2px solid #aaa; padding-top: 6px; font-size: 18px; color: #334; position: relative; }
.st0 { position: absolute; left: 2px; top: 4px; }
.stb { display: block; border: solid #c8c8c8; border-width: 2px 0 0 2px; height: 24px; padding-left: 2px; line-height: 22px; white-space: nowrap; }
.b1 { margin-left: 954px; width: 581px; }
.b2 { margin-left: 5px; width: 96px; }
.b3 { margin-left: 6px; flex: 1; }

/* annotations over the window */
.hl { position: absolute; border: 5px solid #00a2e8; }
.hl1 { left: 717px; top: 62px; width: 155px; height: 62px; }
.hl2 { left: 739px; top: 148px; width: 156px; height: 61px; }
.hl3 { left: 889px; top: 175px; width: 18px; height: 3px; border-width: 3px 0 0; }
.eq { left: 903px; top: 159px; width: 78px; height: 42px; border-width: 4px; border-radius: 11px; color: #00a2e8; font-size: 21px; font-weight: bold; display: flex; align-items: center; justify-content: center; padding-right: 4px; }
.wm { position: absolute; left: 1676px; top: 942px; font-size: 30px; font-weight: bold; color: #d4d4d4; -webkit-text-stroke: 1px #999; white-space: nowrap; }
.wmlogo { position: absolute; left: 1578px; top: 968px; }
```
